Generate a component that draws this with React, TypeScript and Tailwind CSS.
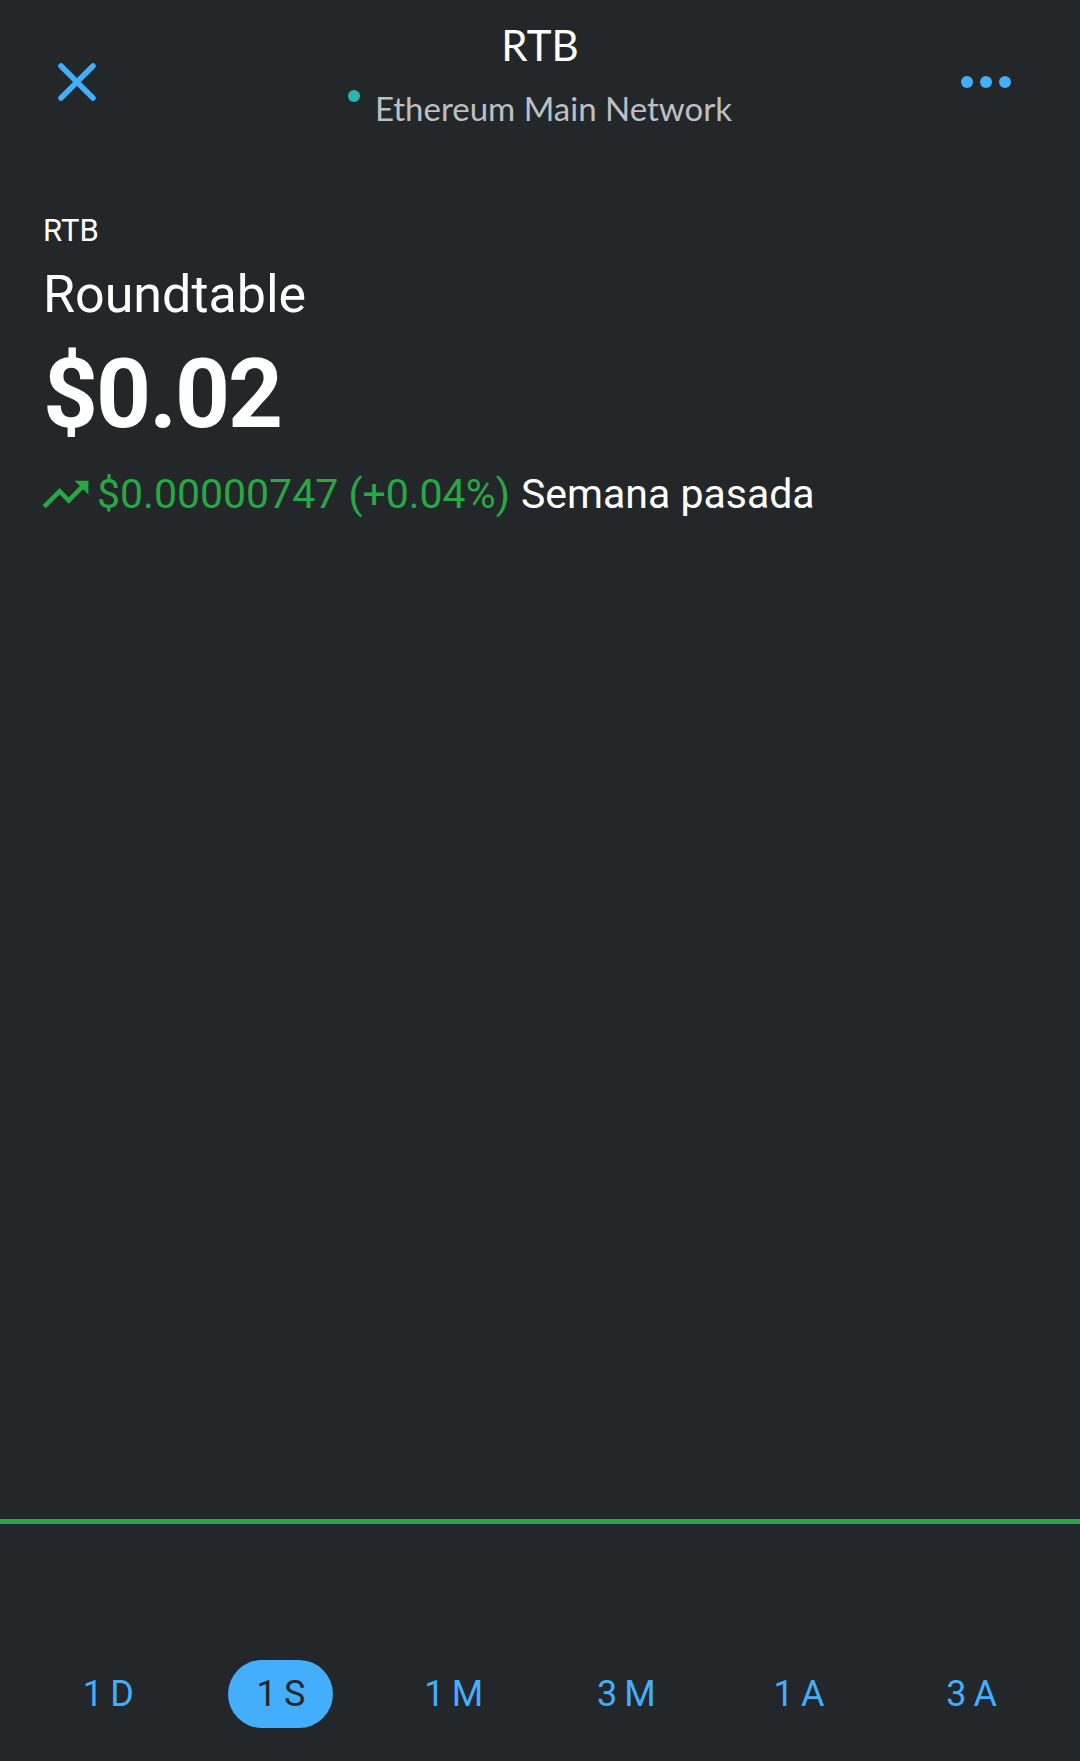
import { useState } from "react";

const ranges = ["1D", "1S", "1M", "3M", "1A", "3A"];

const CloseIcon = () => (
  <svg width="38" height="38" viewBox="0 0 38 38" fill="none">
    <path d="M3 3L35 35M35 3L3 35" stroke="#43aefc" strokeWidth="5.5" strokeLinecap="round" />
  </svg>
);

const MoreIcon = () => (
  <div className="flex items-center gap-[7px]">
    <span className="w-[12px] h-[12px] rounded-full bg-[#43aefc]" />
    <span className="w-[12px] h-[12px] rounded-full bg-[#43aefc]" />
    <span className="w-[12px] h-[12px] rounded-full bg-[#43aefc]" />
  </div>
);

const TrendUp = () => (
  <svg width="55" height="55" viewBox="0 0 24 24" fill="#28a745">
    <path d="M16 6l2.29 2.29-4.88 4.88-4-4L2 16.59 3.41 18l6-6 4 4 6.3-6.29L22 12V6z" />
  </svg>
);

const App = () => {
  const [active, setActive] = useState("1S");

  return (
    <div className="min-h-screen bg-[#24272a] flex flex-col font-['Roboto',sans-serif]">
      {/* header */}
      <div className="flex items-start pt-[20px]">
        <div className="w-[140px] pl-[58px] mt-[43px]">
          <CloseIcon />
        </div>
        <div className="flex-1 flex flex-col items-center font-['Lato',sans-serif]">
          <h1 className="text-[42px] leading-[50px] text-white font-normal">RTB</h1>
          <div className="mt-[18px] flex items-start gap-[15px]">
            <span className="mt-[2px] w-[12px] h-[12px] rounded-full bg-[#29b6af]" />
            <span className="text-[33px] leading-[40px] text-[#bbc0c5]">Ethereum Main Network</span>
          </div>
        </div>
        <div className="w-[140px] pr-[69px] mt-[56px] flex justify-end">
          <MoreIcon />
        </div>
      </div>

      {/* token info */}
      <div className="px-[43px]">
        <p className="mt-[85px] text-[31px] leading-[36px] text-white">RTB</p>
        <p className="mt-[15px] text-[52px] leading-[62px] text-white">Roundtable</p>
        <p className="mt-[13px] text-[96px] leading-[110px] font-bold text-white tracking-[-2px]">$0.02</p>
        <div className="mt-[20px] -ml-[5px] flex items-center h-[50px]">
          <TrendUp />
          <span className="ml-[4px] text-[41px] leading-[50px] text-[#28a745]">
            $0.00000747 (+0.04%)
          </span>
          <span className="ml-[11px] text-[41px] leading-[50px] text-white">Semana pasada</span>
        </div>
      </div>

      {/* chart */}
      <div className="h-[1000px]" />
      <div className="h-[5px] bg-[#28a745]" />

      {/* ranges */}
      <div className="mt-[136px] px-[22px] grid grid-cols-6">
        {ranges.map((r) => (
          <div key={r} className="flex justify-center">
            <button
              onClick={() => setActive(r)}
              className={`w-[105px] h-[68px] rounded-full text-[36px] tracking-[0.2em] pl-[0.2em] leading-none ${
                active === r ? "bg-[#43aefc] text-[#24272a]" : "text-[#43aefc]"
              }`}
            >
              {r}
            </button>
          </div>
        ))}
      </div>
    </div>
  );
};

export default App;
